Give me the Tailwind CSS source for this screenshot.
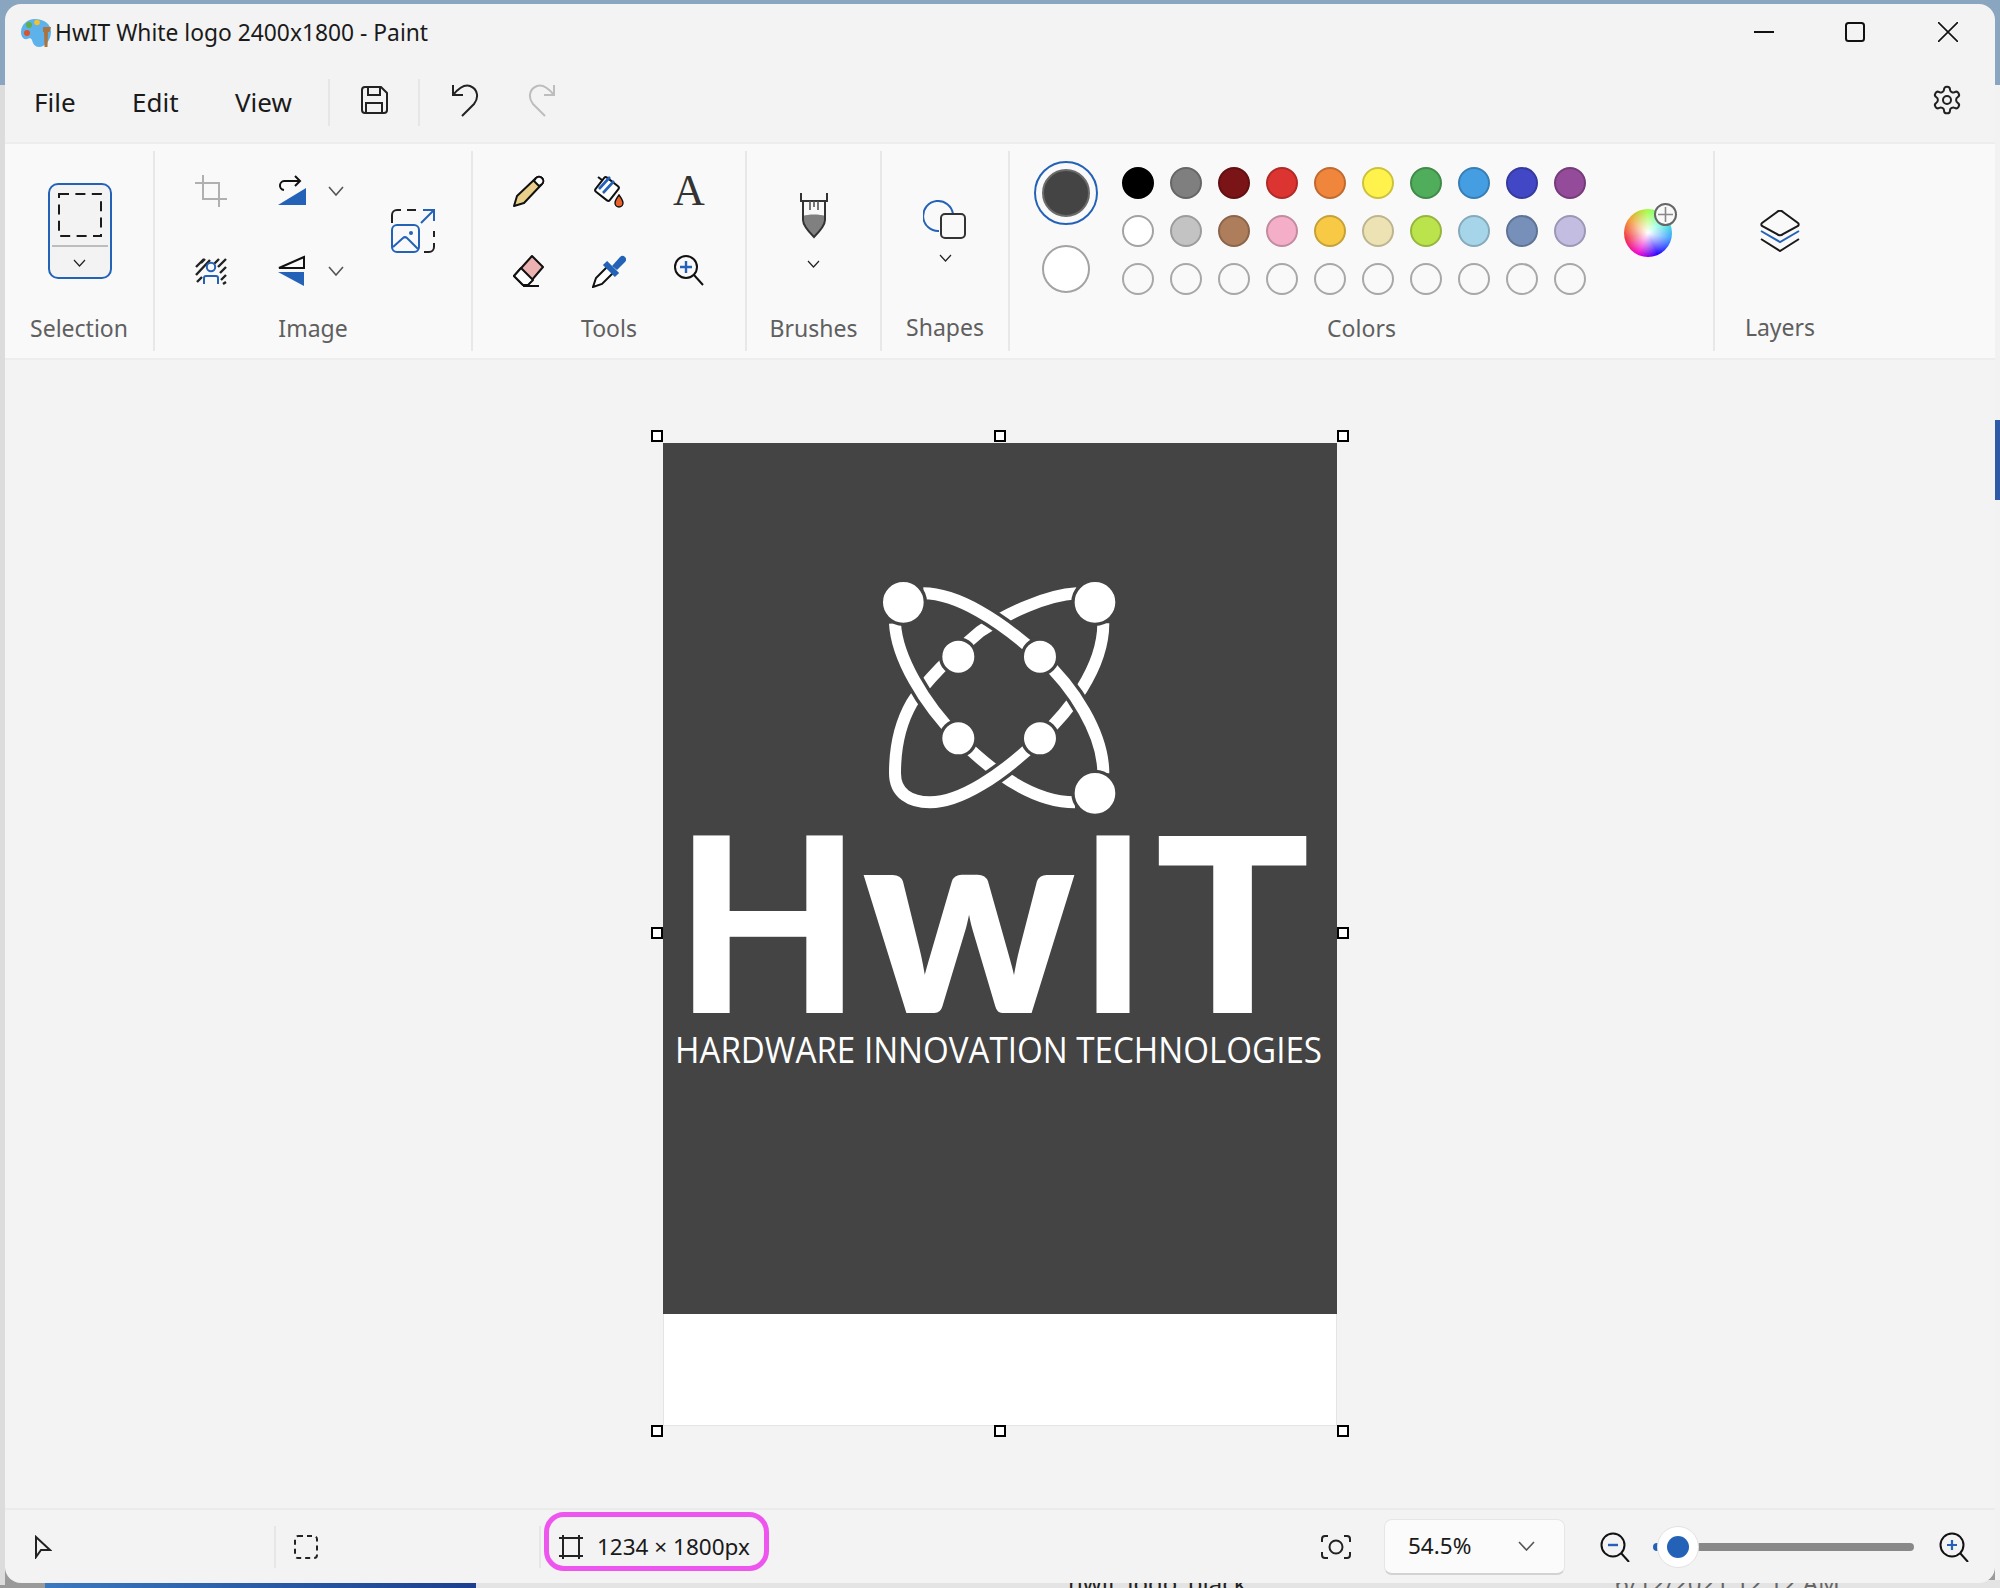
<!DOCTYPE html>
<html lang="en">
<head>
<meta charset="UTF-8">
<title>HwIT White logo 2400x1800 - Paint</title>
<script src="https://cdn.jsdelivr.net/npm/@tailwindcss/browser@4"></script>
</head>
<body class="relative w-[2000px] h-[1588px] overflow-hidden bg-[#9a9a9a] font-['Noto_Sans',sans-serif]">

<!-- desktop behind the window -->
<div class="absolute left-0 top-0 w-full h-[85px] bg-[#8aa5c0]"></div>
<div class="absolute left-0 top-[85px] w-[5px] h-[1500px] bg-[#dcdcdc]"></div>
<div class="absolute left-[1995px] top-[85px] w-[5px] h-[1500px] bg-[#f2f2f2]"></div>
<div class="absolute left-[1995px] top-[420px] w-[5px] h-[80px] bg-[#2f5aa8]"></div>
<div class="absolute left-[45px] top-[1580px] w-[431px] h-[8px] bg-gradient-to-r from-[#3a78c0] to-[#1c3f8f]"></div>
<div class="absolute left-[476px] top-[1580px] w-[1524px] h-[8px] bg-[#e4e4e4]"></div>
<div class="absolute left-[1068px] top-[1568px] text-[24px] leading-[30px] text-[#222]">hwit_logo_black</div>
<div class="absolute left-[1615px] top-[1568px] text-[24px] leading-[30px] text-[#666]">6/12/2021 12:12 AM</div>

<!-- paint window -->
<div class="absolute left-[5px] top-[4px] w-[1990px] h-[1579px] bg-[#f3f3f3] rounded-[16px] overflow-hidden flex flex-col">

  <!-- title bar -->
  <div class="h-[58px] flex items-center shrink-0">
    <svg class="ml-[15px] w-[32px] h-[32px]" viewBox="0 0 32 32">
      <path d="M15 2C7 2 1 8 1 15c0 5 3 8 6 7 3-1 4-1 5 1 1 4 3 7 7 7 6 0 12-7 12-15C31 7 24 2 15 2z" fill="#5db2ec"/>
      <circle cx="7" cy="16" r="3" fill="#d9532c"/>
      <circle cx="9" cy="8" r="3" fill="#5fae4c"/>
      <circle cx="17" cy="5.5" r="2.8" fill="#f2c230"/>
      <path d="M23 10h8l-1.5 5h-1.5l-.5 15h-3l-.5-15H23z" fill="#a9743f"/>
    </svg>
    <span class="ml-[3px] text-[22.8px] text-[#1a1a1a] leading-none">HwIT White logo 2400x1800 - Paint</span>
    <div class="ml-auto flex items-center pr-[37px] mb-[2px]">
      <svg class="w-[20px] h-[20px] mr-[71px]" viewBox="0 0 20 20"><path d="M0 10h20" stroke="#111" stroke-width="2"/></svg>
      <svg class="w-[20px] h-[20px] mr-[73px]" viewBox="0 0 20 20"><rect x="1" y="1" width="18" height="18" rx="2.5" fill="none" stroke="#111" stroke-width="2"/></svg>
      <svg class="w-[20px] h-[20px]" viewBox="0 0 20 20"><path d="M0 0l20 20M20 0L0 20" stroke="#111" stroke-width="1.6"/></svg>
    </div>
  </div>

  <!-- menu row -->
  <div class="h-[80px] shrink-0 flex items-center text-[26px] text-[#1a1a1a]">
    <span class="ml-[29px] w-[98px] mt-[1px]">File</span>
    <span class="w-[103px] mt-[1px]">Edit</span>
    <span class="w-[93px] mt-[1px]">View</span>
    <div class="w-[2px] h-[47px] bg-[#e6e6e6]"></div>
    <div class="w-[88px] flex justify-center mb-[5px]">
      <svg class="w-[28px] h-[28px]" viewBox="0 0 28 28" fill="none" stroke="#222" stroke-width="2"><path d="M5 1h16l6 6v17a3 3 0 0 1-3 3H5a3 3 0 0 1-3-3V4a3 3 0 0 1 3-3z"/><path d="M8 1v8h12V1M6 27v-10h16v10"/></svg>
    </div>
    <div class="w-[2px] h-[47px] bg-[#e6e6e6]"></div>
    <div class="w-[90px] flex justify-center mb-[5px]">
      <svg class="w-[28px] h-[34px]" viewBox="0 0 28 34" fill="none" stroke="#222" stroke-width="2"><path d="M2 2v10h10M2 12C7 6 13 1 19 3c8 3 9 12 4 18L11 33"/></svg>
    </div>
    <div class="ml-[15px] w-[33px] flex justify-center mb-[5px]">
      <svg class="w-[28px] h-[34px]" viewBox="0 0 28 34" fill="none" stroke="#bdbdbd" stroke-width="2"><path d="M26 2v10H16M26 12C21 6 15 1 9 3 1 6 0 15 5 21l12 12"/></svg>
    </div>
    <svg class="ml-auto mr-[32px] mb-[5px] w-[32px] h-[32px]" viewBox="0 0 24 24" fill="none" stroke="#222" stroke-width="1.5"><path d="M12.22 2h-.44a2 2 0 0 0-2 2v.18a2 2 0 0 1-1 1.73l-.43.25a2 2 0 0 1-2 0l-.15-.08a2 2 0 0 0-2.73.73l-.22.38a2 2 0 0 0 .73 2.73l.15.1a2 2 0 0 1 1 1.72v.51a2 2 0 0 1-1 1.74l-.15.09a2 2 0 0 0-.73 2.73l.22.38a2 2 0 0 0 2.73.73l.15-.08a2 2 0 0 1 2 0l.43.25a2 2 0 0 1 1 1.73V20a2 2 0 0 0 2 2h.44a2 2 0 0 0 2-2v-.18a2 2 0 0 1 1-1.73l.43-.25a2 2 0 0 1 2 0l.15.08a2 2 0 0 0 2.73-.73l.22-.39a2 2 0 0 0-.73-2.73l-.15-.08a2 2 0 0 1-1-1.74v-.5a2 2 0 0 1 1-1.74l.15-.09a2 2 0 0 0 .73-2.73l-.22-.38a2 2 0 0 0-2.73-.73l-.15.08a2 2 0 0 1-2 0l-.43-.25a2 2 0 0 1-1-1.73V4a2 2 0 0 0-2-2z"/><circle cx="12" cy="12" r="3"/></svg>
  </div>

  <!-- ribbon -->
  <div class="h-[218px] shrink-0 bg-[#f9f9f9] border-y-2 border-[#ededed] py-[7px] flex text-[23px] text-[#5f5f5f]">

    <!-- Selection -->
    <div class="w-[150px] h-[200px] border-r-2 border-[#e8e8e8] flex flex-col items-center">
      <div class="mt-[32px] ml-[1px] w-[64px] h-[96px] rounded-[10px] border-[2.5px] border-[#2462b8] bg-[#f3f3f3] flex flex-col items-center">
        <svg class="mt-[8px] w-[44px] h-[44px]" viewBox="0 0 44 44" fill="none" stroke="#1a1a1a" stroke-width="2"><rect x="1" y="1" width="42" height="42" stroke-dasharray="10 6.4"/></svg>
        <div class="mt-[8px] w-[56px] h-[2px] bg-[#bdbdbd]"></div>
        <svg class="mt-[12px] w-[13px] h-[8px]" viewBox="0 0 13 8" fill="none" stroke="#222" stroke-width="1.2"><path d="M1 1l5.5 6L12 1"/></svg>
      </div>
      <span class="mt-[34px] leading-[30px]">Selection</span>
    </div>

    <!-- Image -->
    <div class="w-[318px] h-[200px] border-r-2 border-[#e8e8e8] flex flex-col">
      <div class="grid grid-cols-[112px_50px_38px_116px] grid-rows-[80px_80px] place-items-center">
        <svg class="w-[32px] h-[32px]" viewBox="0 0 32 32" fill="none" stroke="#b0b0b0" stroke-width="2"><path d="M8 0v24h24M0 8h24v24"/></svg>
        <svg class="w-[32px] h-[32px]" viewBox="0 0 32 32"><path d="M2 30l28-17v17z" fill="#2462b8"/><path d="M24 6H9a4.5 4.5 0 0 0-1 9M19 1l5 5-5 5" fill="none" stroke="#111" stroke-width="2"/></svg>
        <svg class="w-[16px] h-[10px]" viewBox="0 0 16 10" fill="none" stroke="#555" stroke-width="1.6"><path d="M1 1l7 8 7-8"/></svg>
        <svg class="row-span-2 w-[44px] h-[44px]" viewBox="0 0 44 44" fill="none" stroke-width="2"><path d="M1 14V6a5 5 0 0 1 5-5h4M16 1h9M43 22v6M43 34v4a5 5 0 0 1-5 5h-5" stroke="#222"/><path d="M32 1h11v11M43 1L30 14" stroke="#2462b8"/><rect x="1" y="16" width="27" height="27" rx="5" stroke="#2462b8"/><circle cx="20" cy="24" r="2" fill="#2462b8"/><path d="M2 38l10-9a3 3 0 0 1 4 0l11 11" stroke="#2462b8"/></svg>
        <svg class="w-[32px] h-[32px]" viewBox="0 0 32 32" fill="none"><path d="M1 12L9 4M1 20L15 5M2 27L7 22M24 4L19 9M31 4L23 12M31 12L25 18M31 20L26 25M31 27l-3 2M10 4L6 8" stroke="#222" stroke-width="2.4"/><circle cx="16" cy="12" r="4.2" stroke="#2462b8" stroke-width="2"/><path d="M9 29v-6a2 2 0 0 1 2-2h10a2 2 0 0 1 2 2v6" stroke="#2462b8" stroke-width="2"/></svg>
        <svg class="w-[32px] h-[32px]" viewBox="0 0 32 32"><path d="M28 2L3 13h25z" fill="none" stroke="#111" stroke-width="2"/><path d="M2 17h26v14z" fill="#2462b8"/></svg>
        <svg class="w-[16px] h-[10px]" viewBox="0 0 16 10" fill="none" stroke="#555" stroke-width="1.6"><path d="M1 1l7 8 7-8"/></svg>
      </div>
      <span class="mt-[2px] leading-[30px] text-center">Image</span>
    </div>

    <!-- Tools -->
    <div class="w-[274px] h-[200px] border-r-2 border-[#e8e8e8] flex flex-col">
      <div class="pl-[16px] grid grid-cols-[80px_80px_80px] grid-rows-[80px_80px] place-items-center">
        <svg class="w-[32px] h-[32px]" viewBox="0 0 32 32" stroke="#111" stroke-width="2" stroke-linejoin="round"><path d="M1 31l3-10L23 3a4 4 0 0 1 6 6L11 28z" fill="#e8cf8a"/><path d="M23 3a4 4 0 0 1 6 6l-3 2-5-5z" fill="#fff"/></svg>
        <svg class="w-[34px] h-[34px]" viewBox="0 0 34 34"><path d="M6 3l4 3" stroke="#111" stroke-width="2"/><rect x="6" y="6" width="18" height="18" rx="2" transform="rotate(38 15 15)" fill="#fff" stroke="#111" stroke-width="2"/><path d="M7 15L18 3M11 19L22 7" stroke="#2462b8" stroke-width="2.6"/><path d="M27 21c-3 4-4 6-4 8a4 4 0 0 0 8 0c0-2-1-4-4-8z" fill="#e8622a" stroke="#111" stroke-width="1.4"/></svg>
        <span class="font-['Liberation_Serif'] text-[44px] leading-none text-[#333]">A</span>
        <svg class="w-[32px] h-[32px]" viewBox="0 0 32 32" stroke="#111" stroke-width="2" stroke-linejoin="round"><path d="M19 1l11 11-12 14-4 4H10L1 21z" fill="#ecb1b1"/><path d="M8 13l12 12-5 5h-5l-9-9z" fill="#fff"/><path d="M10 31h16"/></svg>
        <svg class="w-[34px] h-[34px]" viewBox="0 0 34 34"><path d="M17 11L4 24l-3 9 9-3 13-13" fill="#fff" stroke="#111" stroke-width="2"/><path d="M13 9l12 12" stroke="#2462b8" stroke-width="6"/><path d="M20 12l8-9a3.5 3.5 0 0 1 5 5l-8 8z" fill="#2462b8"/></svg>
        <svg class="w-[30px] h-[32px]" viewBox="0 0 30 32" fill="none"><circle cx="12" cy="12" r="11" stroke="#111" stroke-width="2"/><path d="M20 20l9 10" stroke="#111" stroke-width="2"/><path d="M12 6v12M6 12h12" stroke="#2462b8" stroke-width="2.4"/></svg>
      </div>
      <span class="mt-[2px] leading-[30px] text-center">Tools</span>
    </div>

    <!-- Brushes -->
    <div class="w-[135px] h-[200px] border-r-2 border-[#e8e8e8] flex flex-col items-center">
      <svg class="mt-[42px] w-[28px] h-[46px]" viewBox="0 0 28 46"><path d="M3 23c5-2 17-2 22 0v4c0 6-7 13-11 17C10 40 3 33 3 27z" fill="#808080"/><path d="M1 0v8h26V0M3 8v19c0 6 7 13 11 17 4-4 11-11 11-17V8" fill="none" stroke="#333" stroke-width="2"/><path d="M10 8v9M14 8v6M18 8v9" stroke="#555" stroke-width="1.6"/></svg>
      <svg class="mt-[21px] w-[13px] h-[8px]" viewBox="0 0 13 8" fill="none" stroke="#222" stroke-width="1.2"><path d="M1 1l5.5 6L12 1"/></svg>
      <span class="mt-[45px] leading-[30px]">Brushes</span>
    </div>

    <!-- Shapes -->
    <div class="w-[128px] h-[200px] border-r-2 border-[#e8e8e8] flex flex-col items-center">
      <svg class="mt-[47px] w-[44px] h-[44px]" viewBox="0 0 44 44" fill="none" stroke-width="2"><path d="M16 33A15 15 0 1 1 30 16" stroke="#2462b8"/><rect x="18" y="16" width="24" height="24" rx="4" stroke="#333"/></svg>
      <svg class="mt-[12px] w-[13px] h-[8px]" viewBox="0 0 13 8" fill="none" stroke="#222" stroke-width="1.2"><path d="M1 1l5.5 6L12 1"/></svg>
      <span class="mt-[50px] leading-[30px]">Shapes</span>
    </div>

    <!-- Colors -->
    <div class="w-[705px] h-[200px] border-r-2 border-[#e8e8e8] flex flex-col">
      <div class="h-[160px] flex">
        <div class="w-[103px] ml-[4px] mr-[-3px] flex flex-col items-center">
          <div class="mt-[10px] w-[64px] h-[64px] rounded-full border-2 border-[#2462b8] flex items-center justify-center">
            <div class="w-[48px] h-[48px] rounded-full bg-[#444444] border-2 border-[#6b6b6b]"></div>
          </div>
          <div class="mt-[20px] w-[48px] h-[48px] rounded-full bg-white border-2 border-[#a3a3a3]"></div>
        </div>
        <div class="pt-[8px] grid grid-cols-[repeat(10,48px)] auto-rows-[48px] place-items-center self-start">
          <div class="w-[32px] h-[32px] rounded-full border-2 bg-[#000000] border-[#000000]"></div>
          <div class="w-[32px] h-[32px] rounded-full border-2 bg-[#7f7f7f] border-[#666666]"></div>
          <div class="w-[32px] h-[32px] rounded-full border-2 bg-[#7a1417] border-[#631012]"></div>
          <div class="w-[32px] h-[32px] rounded-full border-2 bg-[#dc3531] border-[#b02a27]"></div>
          <div class="w-[32px] h-[32px] rounded-full border-2 bg-[#f0853c] border-[#c06a30]"></div>
          <div class="w-[32px] h-[32px] rounded-full border-2 bg-[#fff24d] border-[#ccc23e]"></div>
          <div class="w-[32px] h-[32px] rounded-full border-2 bg-[#50ad5c] border-[#408a4a]"></div>
          <div class="w-[32px] h-[32px] rounded-full border-2 bg-[#459ee2] border-[#377eb5]"></div>
          <div class="w-[32px] h-[32px] rounded-full border-2 bg-[#4248c5] border-[#353a9e]"></div>
          <div class="w-[32px] h-[32px] rounded-full border-2 bg-[#944b99] border-[#763c7a]"></div>
          <div class="w-[32px] h-[32px] rounded-full border-2 bg-white border-[#a3a3a3]"></div>
          <div class="w-[32px] h-[32px] rounded-full border-2 bg-[#c3c3c3] border-[#9c9c9c]"></div>
          <div class="w-[32px] h-[32px] rounded-full border-2 bg-[#ae7d5c] border-[#8b644a]"></div>
          <div class="w-[32px] h-[32px] rounded-full border-2 bg-[#f4aec8] border-[#c38ba0]"></div>
          <div class="w-[32px] h-[32px] rounded-full border-2 bg-[#f8c945] border-[#c6a137]"></div>
          <div class="w-[32px] h-[32px] rounded-full border-2 bg-[#ece2b3] border-[#bdb58f]"></div>
          <div class="w-[32px] h-[32px] rounded-full border-2 bg-[#bbe34c] border-[#96b63d]"></div>
          <div class="w-[32px] h-[32px] rounded-full border-2 bg-[#a6d5ea] border-[#85aabb]"></div>
          <div class="w-[32px] h-[32px] rounded-full border-2 bg-[#7690ba] border-[#5e7395]"></div>
          <div class="w-[32px] h-[32px] rounded-full border-2 bg-[#c3bde2] border-[#9c97b5]"></div>
          <div class="w-[32px] h-[32px] rounded-full border-2 bg-[#f9f9f9] border-[#a8a8a8]"></div>
          <div class="w-[32px] h-[32px] rounded-full border-2 bg-[#f9f9f9] border-[#a8a8a8]"></div>
          <div class="w-[32px] h-[32px] rounded-full border-2 bg-[#f9f9f9] border-[#a8a8a8]"></div>
          <div class="w-[32px] h-[32px] rounded-full border-2 bg-[#f9f9f9] border-[#a8a8a8]"></div>
          <div class="w-[32px] h-[32px] rounded-full border-2 bg-[#f9f9f9] border-[#a8a8a8]"></div>
          <div class="w-[32px] h-[32px] rounded-full border-2 bg-[#f9f9f9] border-[#a8a8a8]"></div>
          <div class="w-[32px] h-[32px] rounded-full border-2 bg-[#f9f9f9] border-[#a8a8a8]"></div>
          <div class="w-[32px] h-[32px] rounded-full border-2 bg-[#f9f9f9] border-[#a8a8a8]"></div>
          <div class="w-[32px] h-[32px] rounded-full border-2 bg-[#f9f9f9] border-[#a8a8a8]"></div>
          <div class="w-[32px] h-[32px] rounded-full border-2 bg-[#f9f9f9] border-[#a8a8a8]"></div>
        </div>
        <div class="relative ml-[30px] mt-[58px] w-[48px] h-[48px]">
          <div class="w-full h-full rounded-full bg-[conic-gradient(#a0ff40,#40ffd0,#40a0ff,#2000ff,#f000d0,#f03040,#f0a030,#a0ff40)]"></div>
          <div class="absolute inset-0 rounded-full bg-[radial-gradient(circle,#ffffff_0%,#ffffff00_70%)]"></div>
          <div class="absolute left-[30px] top-[-6px] w-[23px] h-[23px] rounded-full bg-[#f9f9f9] border-2 border-[#666] flex items-center justify-center">
            <svg class="w-[15px] h-[15px]" viewBox="0 0 15 15"><path d="M7.5 0v15M0 7.5h15" stroke="#888" stroke-width="1.6"/></svg>
          </div>
        </div>
      </div>
      <span class="mt-[2px] leading-[30px] text-center">Colors</span>
    </div>

    <!-- Layers -->
    <div class="w-[130px] h-[200px] flex flex-col items-center">
      <svg class="mt-[59px] w-[42px] h-[42px]" viewBox="0 0 42 42" fill="none" stroke-width="2"><path d="M18 2a4 4 0 0 1 6 0l15 11a2 2 0 0 1 0 3L24 24a4 4 0 0 1-6 0L3 16a2 2 0 0 1 0-3z" stroke="#1a1a1a"/><path d="M2 21l19 11 19-11" stroke="#2462b8"/><path d="M2 29l19 12 19-12" stroke="#1a1a1a"/></svg>
      <span class="mt-[60px] leading-[30px]">Layers</span>
    </div>
  </div>

  <!-- canvas -->
  <div class="flex-1 min-h-0">
    <div class="relative ml-[658px] mt-[83px] w-[674px]">
      <svg class="block w-[674px] h-[871px]" viewBox="663 443 674 871">
        <rect x="663" y="443" width="674" height="871" fill="#444444"/>
        <g transform="translate(840 560) scale(.3333)" fill="none" stroke-linecap="butt">
          <path d="M710 100C620 105 500 160 420 215C340 280 250 370 215 430C175 500 165 570 165 640C165 700 210 727 270 727C360 727 480 650 600 535C680 460 790 330 790 190" stroke="#fff" stroke-width="36"/>
          <path d="M250 100C350 100 480 180 600 290C700 380 790 520 790 640" stroke="#444444" stroke-width="56"/>
          <path d="M165 190C170 290 250 430 355 535C440 620 570 727 705 727" stroke="#444444" stroke-width="56"/>
          <path d="M250 100C350 100 480 180 600 290C700 380 790 520 790 640" stroke="#fff" stroke-width="36"/>
          <path d="M165 190C170 290 250 430 355 535C440 620 570 727 705 727" stroke="#fff" stroke-width="36"/>
          <path d="M270 727C360 727 480 650 600 535" stroke="#444444" stroke-width="56"/>
          <path d="M270 727C360 727 480 650 600 535" stroke="#fff" stroke-width="36"/>
          <g fill="#fff" stroke="#444444" stroke-width="10">
            <circle cx="190" cy="127" r="66"/>
            <circle cx="765" cy="127" r="66"/>
            <circle cx="765" cy="700" r="66"/>
            <circle cx="355" cy="290" r="53"/>
            <circle cx="600" cy="290" r="53"/>
            <circle cx="355" cy="535" r="53"/>
            <circle cx="600" cy="535" r="53"/>
          </g>
        </g>
        <g fill="#fff" class="font-['Lato',sans-serif] font-black" font-size="244">
          <text x="675" y="1013" textLength="186" lengthAdjust="spacingAndGlyphs">H</text>
          <text x="862" y="1013" font-size="268" textLength="214" lengthAdjust="spacingAndGlyphs">w</text>
          <text x="1080" y="1013" textLength="66" lengthAdjust="spacingAndGlyphs">I</text>
          <text x="1155" y="1013" textLength="155" lengthAdjust="spacingAndGlyphs">T</text>
        </g>
        <text x="675" y="1063" textLength="647" lengthAdjust="spacingAndGlyphs" fill="#fff" class="font-['Open_Sans',sans-serif]" font-size="36.5">HARDWARE INNOVATION TECHNOLOGIES</text>
      </svg>
      <div class="h-[112px] bg-white border-x border-b border-[#e5e5e5]"></div>

      <!-- resize handles -->
      <div class="absolute left-[-12px] top-[-13px] w-[12px] h-[12px] bg-white border-2 border-black"></div>
      <div class="absolute left-[331px] top-[-13px] w-[12px] h-[12px] bg-white border-2 border-black"></div>
      <div class="absolute left-[674px] top-[-13px] w-[12px] h-[12px] bg-white border-2 border-black"></div>
      <div class="absolute left-[-12px] top-[484px] w-[12px] h-[12px] bg-white border-2 border-black"></div>
      <div class="absolute left-[674px] top-[484px] w-[12px] h-[12px] bg-white border-2 border-black"></div>
      <div class="absolute left-[-12px] top-[982px] w-[12px] h-[12px] bg-white border-2 border-black"></div>
      <div class="absolute left-[331px] top-[982px] w-[12px] h-[12px] bg-white border-2 border-black"></div>
      <div class="absolute left-[674px] top-[982px] w-[12px] h-[12px] bg-white border-2 border-black"></div>
    </div>
  </div>

  <!-- status bar -->
  <div class="h-[75px] shrink-0 border-t-2 border-[#ebebeb] flex items-center text-[22.5px] text-[#1a1a1a]">
    <svg class="ml-[29px] w-[18px] h-[24px]" viewBox="0 0 18 24" fill="none" stroke="#222" stroke-width="2"><path d="M2 2v20l5-7h9z"/></svg>
    <div class="ml-[222px] w-[2px] h-[42px] bg-[#e6e6e6]"></div>
    <svg class="ml-[18px] w-[24px] h-[24px]" viewBox="0 0 24 24" fill="none" stroke="#222" stroke-width="2"><rect x="1" y="1" width="22" height="22" rx="3" stroke-dasharray="5 4"/></svg>
    <div class="ml-[221px] w-[2px] h-[42px] bg-[#e6e6e6]"></div>
    <div class="ml-[3px] mb-[10px] w-[225px] h-[59px] rounded-[20px] border-[5px] border-[#ee55ee] flex items-center pl-[10px] pt-[10px]">
      <svg class="w-[24px] h-[24px]" viewBox="0 0 24 24" fill="none" stroke="#222" stroke-width="2"><path d="M4 0v24M20 0v24M0 3h24M0 21h24"/></svg>
      <span class="ml-[14px]">1234 × 1800px</span>
    </div>
    <svg class="ml-[552px] w-[30px] h-[24px]" viewBox="0 0 30 24" fill="none" stroke="#222" stroke-width="2"><path d="M1 7V4a3 3 0 0 1 3-3h3M23 1h3a3 3 0 0 1 3 3v3M29 17v3a3 3 0 0 1-3 3h-3M7 23H4a3 3 0 0 1-3-3v-3"/><circle cx="15" cy="12" r="6.5"/></svg>
    <div class="ml-[33px] w-[181px] h-[56px] rounded-[8px] bg-[#fbfbfb] border border-[#e6e6e6] border-b-2 border-b-[#d2d2d2] flex items-center pl-[23px]">
      <span>54.5%</span>
      <svg class="ml-[47px] w-[17px] h-[10px]" viewBox="0 0 17 10" fill="none" stroke="#555" stroke-width="1.6"><path d="M1 1l7.5 8L16 1"/></svg>
    </div>
    <svg class="ml-[35px] w-[30px] h-[30px]" viewBox="0 0 30 30" fill="none"><circle cx="13" cy="13" r="11.5" stroke="#111" stroke-width="2"/><path d="M21 21l8 9" stroke="#111" stroke-width="2"/><path d="M8 13h10" stroke="#2462b8" stroke-width="2.4"/></svg>
    <div class="relative ml-[11px] w-[273px] h-[8px] rounded-full">
      <div class="absolute left-[55px] right-0 top-0 h-[8px] rounded-full bg-[#888888]"></div>
      <div class="absolute left-[12px] top-0 w-[10px] h-[8px] rounded-full bg-[#2462b8]"></div>
      <div class="absolute left-[16px] top-[-17px] w-[42px] h-[42px] rounded-full bg-white border border-[#e2e2e2] flex items-center justify-center">
        <div class="w-[22px] h-[22px] rounded-full bg-[#2462b8]"></div>
      </div>
    </div>
    <svg class="ml-[25px] w-[30px] h-[30px]" viewBox="0 0 30 30" fill="none"><circle cx="13" cy="13" r="11.5" stroke="#111" stroke-width="2"/><path d="M21 21l8 9" stroke="#111" stroke-width="2"/><path d="M8 13h10M13 8v10" stroke="#2462b8" stroke-width="2.2"/></svg>
  </div>
</div>
</body>
</html>
